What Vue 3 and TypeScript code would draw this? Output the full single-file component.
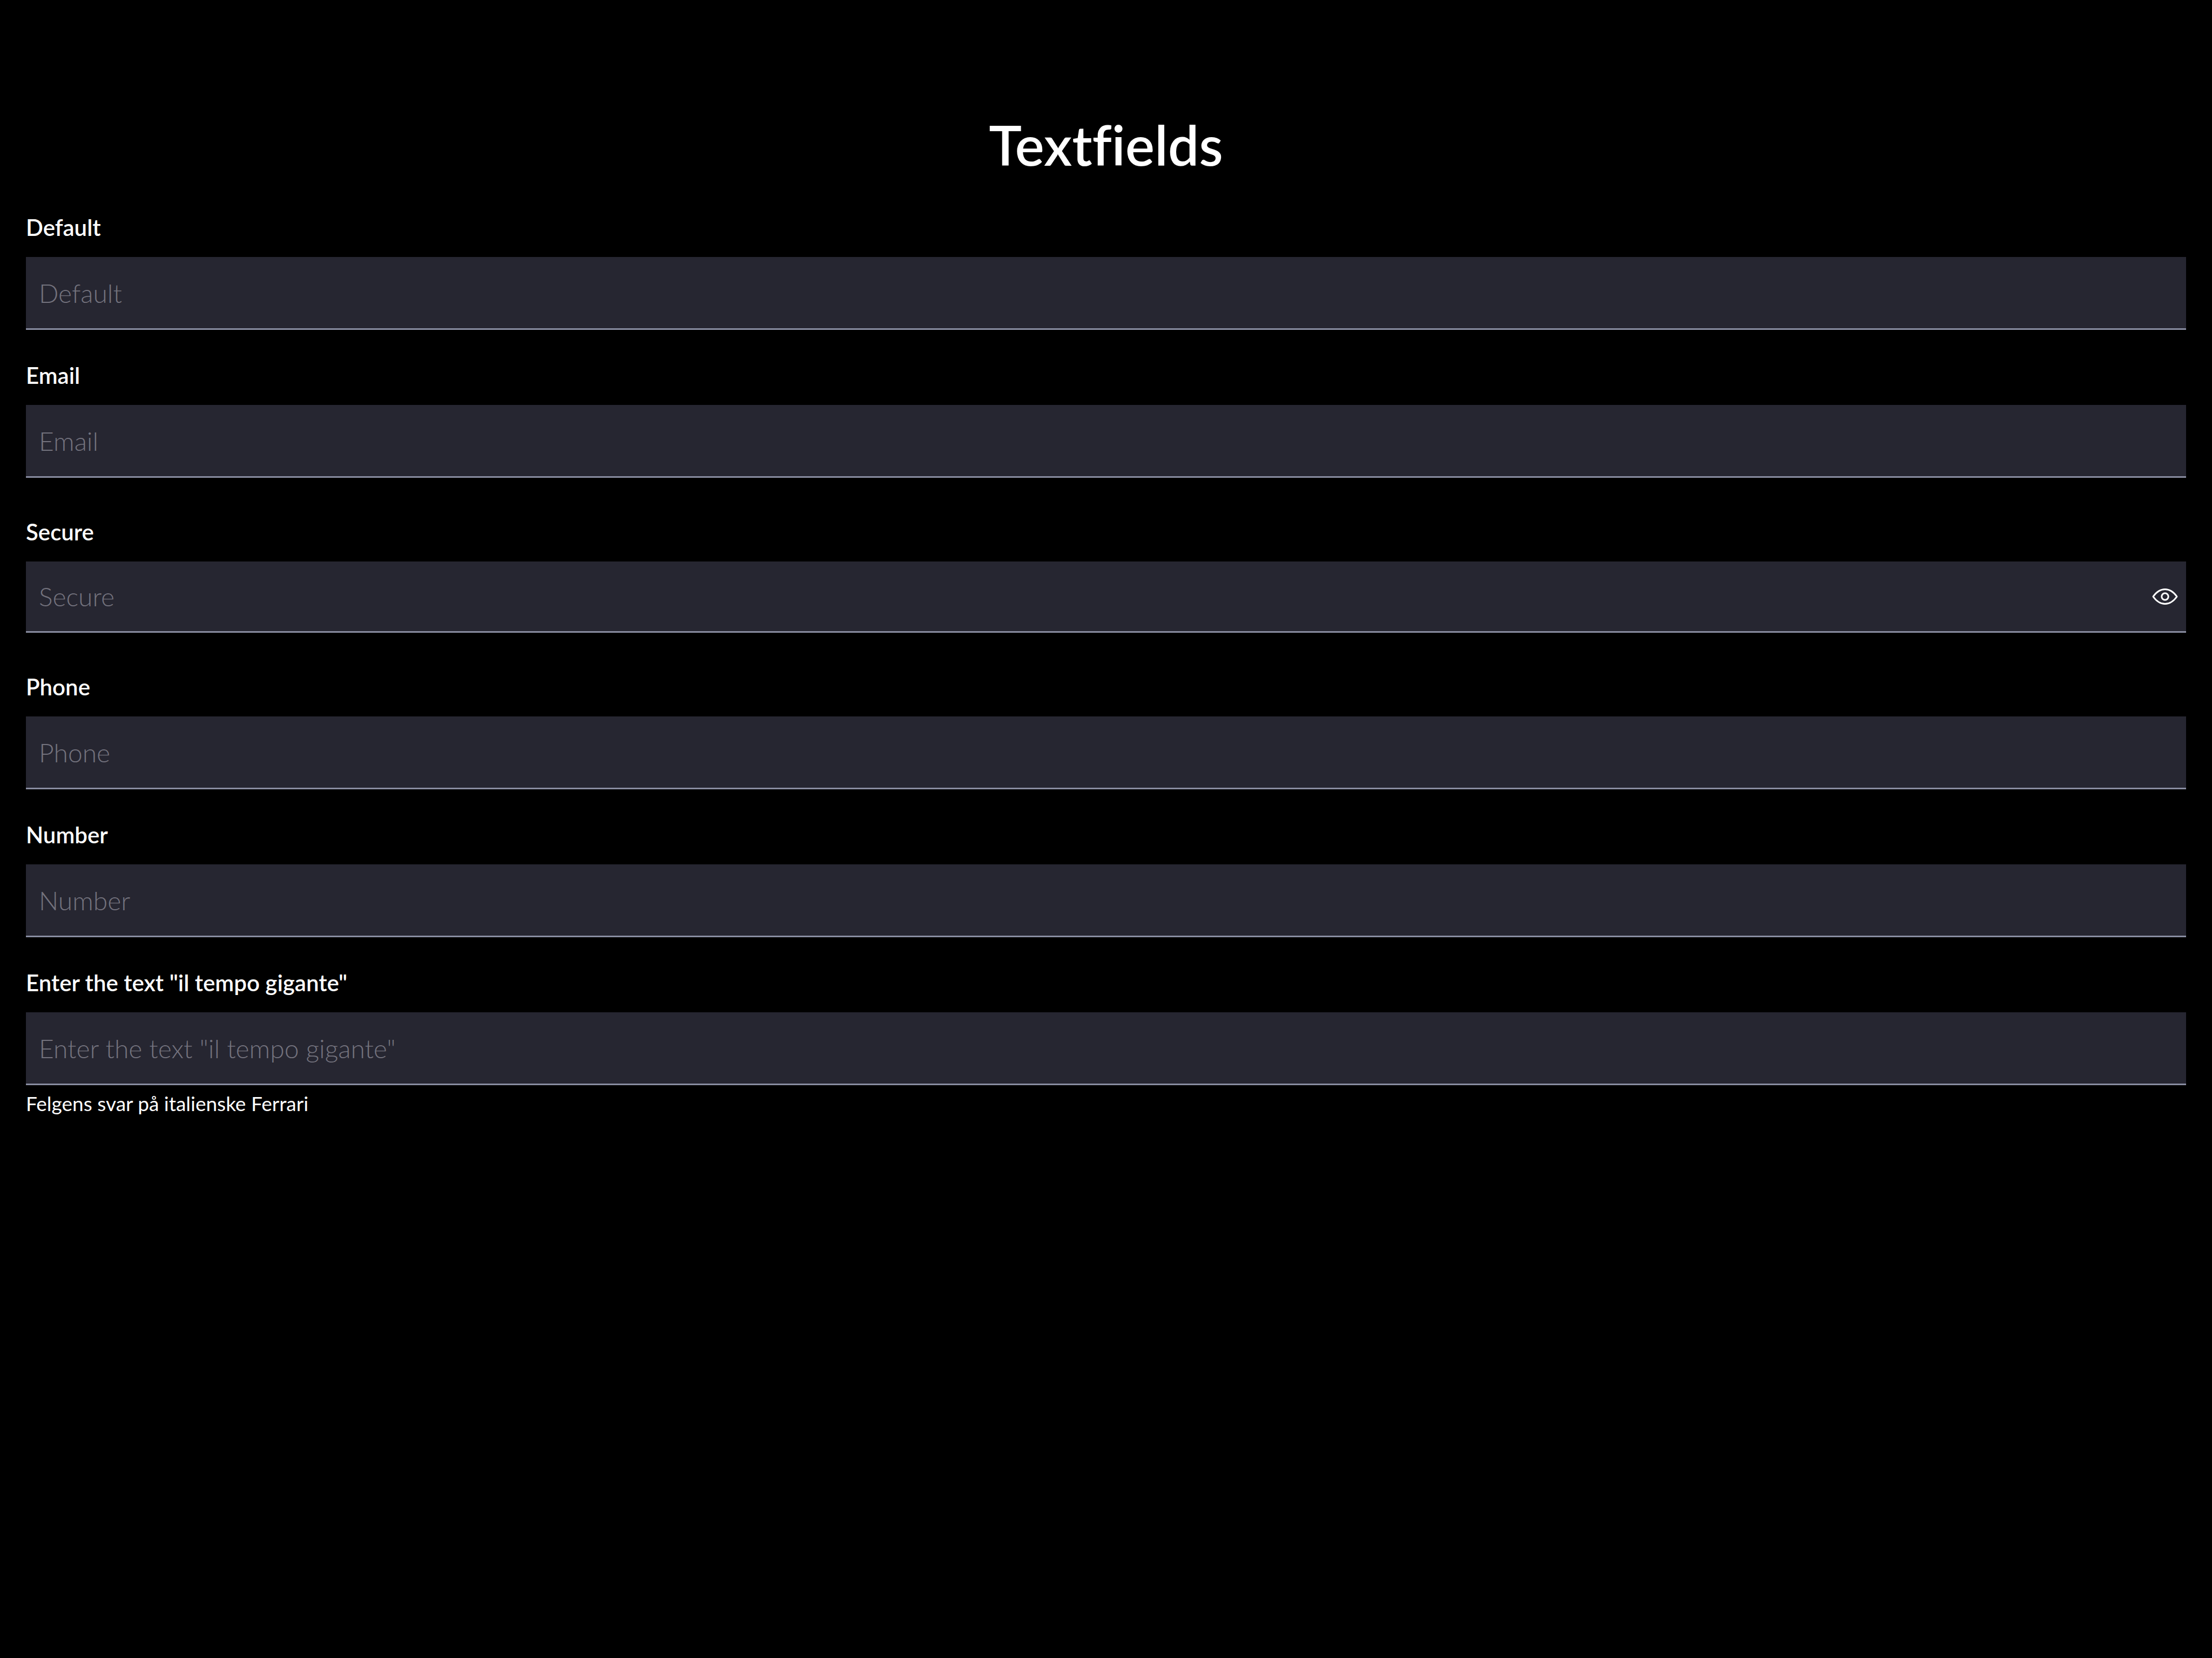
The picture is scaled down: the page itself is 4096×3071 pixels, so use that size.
<script setup lang="ts">
import { reactive, ref } from 'vue'

interface Field {
  id: string
  label: string
  type: 'text' | 'email' | 'password' | 'tel'
  helper?: string
}

const fields: Field[] = [
  { id: 'default', label: 'Default', type: 'text' },
  { id: 'email', label: 'Email', type: 'email' },
  { id: 'secure', label: 'Secure', type: 'password' },
  { id: 'phone', label: 'Phone', type: 'tel' },
  { id: 'number', label: 'Number', type: 'text' },
  {
    id: 'tempo',
    label: 'Enter the text "il tempo gigante"',
    type: 'text',
    helper: 'Felgens svar på italienske Ferrari',
  },
]

const values = reactive<Record<string, string>>({})
const revealed = ref(false)

function inputType(field: Field): string {
  return field.type === 'password' && revealed.value ? 'text' : field.type
}
</script>

<template>
  <main class="page">
    <h1 class="title">Textfields</h1>
    <form class="form" @submit.prevent>
      <div
        v-for="field in fields"
        :key="field.id"
        class="field"
        :class="{ secure: field.type === 'password' }"
      >
        <label class="label" :for="field.id">{{ field.label }}</label>
        <div class="box">
          <input
            :id="field.id"
            v-model="values[field.id]"
            class="input"
            :type="inputType(field)"
            :placeholder="field.label"
            :aria-describedby="field.helper ? field.id + '-helper' : undefined"
          />
          <button
            v-if="field.type === 'password'"
            class="reveal"
            type="button"
            aria-label="Show password"
            :aria-pressed="revealed"
            @click="revealed = !revealed"
          >
            <svg class="eye" viewBox="0 0 48 32" aria-hidden="true">
              <path d="M2 16C8 7.5 15 2.5 24 2.5S40 7.5 46 16C40 24.500 33 29.500 24 29.500S8 24.500 2 16Z" />
              <circle cx="24" cy="16" r="6.200" />
            </svg>
          </button>
        </div>
        <p v-if="field.helper" :id="field.id + '-helper'" class="helper">{{ field.helper }}</p>
      </div>
    </form>
  </main>
</template>

<style>
body {
  background: #000;
}
</style>

<style scoped>
.page {
  box-sizing: border-box;
  min-height: 100vh;
  padding: 208px 48px 48px;
  background: #000;
  color: #fff;
  font-family: Lato, "Open Sans", sans-serif;
  font-variant-ligatures: none;
}

.title {
  margin: 0 0 68px;
  font-size: 102px;
  line-height: 120px;
  font-weight: 600;
  text-align: center;
}

.form {
  display: flex;
  flex-direction: column;
  gap: 59px;
}

.field {
  display: flex;
  flex-direction: column;
}

.field.secure {
  padding: 16px 0;
}

.label {
  align-self: flex-start;
  margin-bottom: 30px;
  font-size: 42px;
  line-height: 50px;
  font-weight: 600;
}

.box {
  display: flex;
  height: 132px;
  background: #262631;
  border-bottom: 3px solid #888ca0;
}

.secure .box {
  height: 129px;
}

.input {
  flex: 1;
  min-width: 0;
  padding: 0 24px;
  border: 0;
  outline: 0;
  background: transparent;
  color: #fff;
  font-family: inherit;
  font-size: 48px;
  font-weight: 300;
  font-variant-ligatures: none;
}

.input::placeholder {
  color: #74737e;
  opacity: 1;
}

.reveal {
  display: flex;
  align-items: center;
  padding: 0 15px;
  border: 0;
  background: transparent;
  color: #fff;
  cursor: pointer;
}

.eye {
  width: 48px;
  height: 32px;
  fill: none;
  stroke: currentColor;
  stroke-width: 3;
  stroke-linejoin: round;
}

.helper {
  margin: 12px 0 0;
  font-size: 37px;
  line-height: 44px;
}
</style>
